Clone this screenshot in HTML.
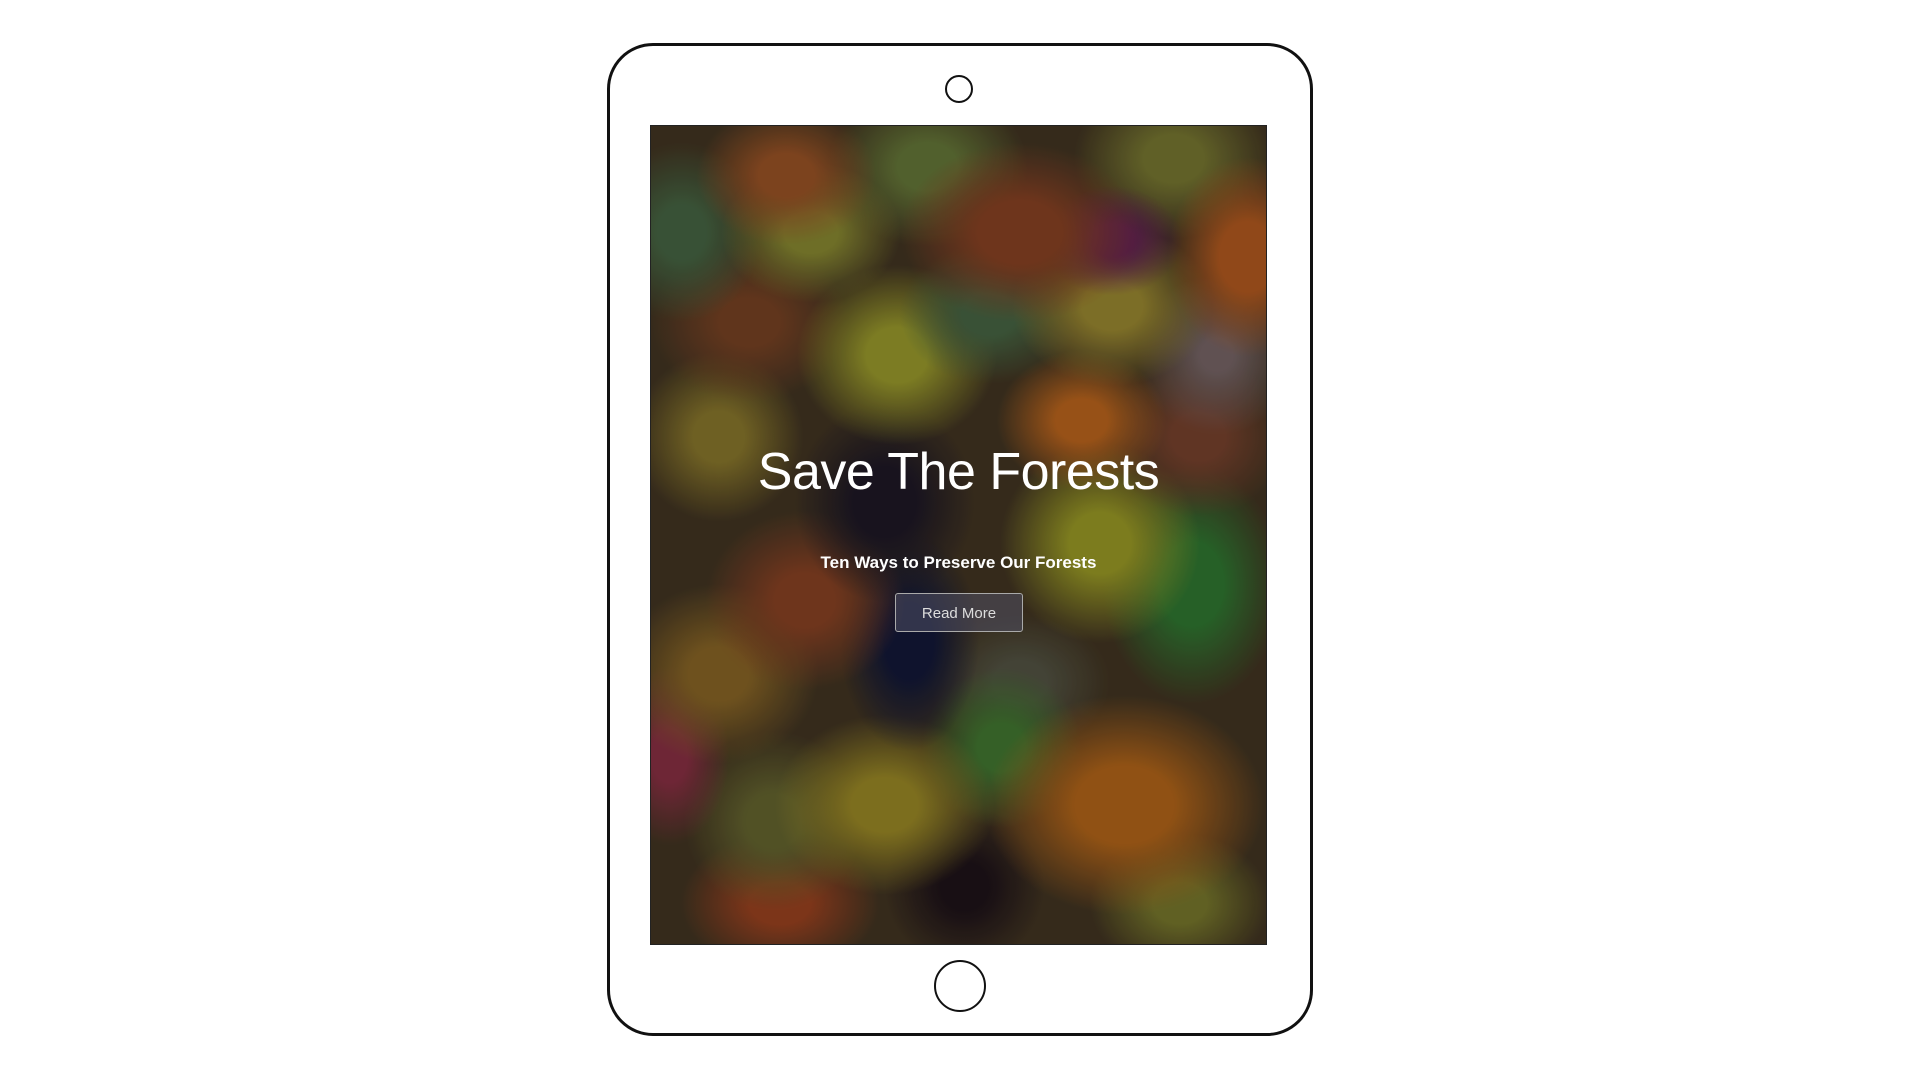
<!DOCTYPE html>
<html><head><meta charset="utf-8"><style>
html,body{margin:0;padding:0;background:#fff;width:1920px;height:1080px;overflow:hidden}
.tab{position:absolute;left:607px;top:43px;width:700px;height:987px;border:3.5px solid #111;border-radius:46px;box-sizing:content-box}
.cam{position:absolute;left:945px;top:75px;width:24px;height:24px;border:2px solid #111;border-radius:50%}
.home{position:absolute;left:934px;top:960px;width:48px;height:48px;border:2px solid #111;border-radius:50%}
.scr{position:absolute;left:650px;top:125px;width:617px;height:820px;border:1px solid #222;box-sizing:border-box;overflow:hidden;
background:
radial-gradient(ellipse 90px 70px at 22% 6%,#8a4a20 30%,transparent 100%),
radial-gradient(ellipse 90px 70px at 26% 13%,#7a7a2a 30%,transparent 100%),
radial-gradient(ellipse 80px 90px at 5% 13%,#3e5a3a 30%,transparent 100%),
radial-gradient(ellipse 120px 90px at 60% 13%,#7a3a1e 35%,transparent 100%),
radial-gradient(ellipse 70px 55px at 75% 14%,#5a1e4a 30%,transparent 100%),
radial-gradient(ellipse 80px 100px at 97% 16%,#a0501a 35%,transparent 100%),
radial-gradient(ellipse 100px 80px at 45% 5%,#5a6a30 30%,transparent 100%),
radial-gradient(ellipse 100px 80px at 85% 4%,#6a6a2a 30%,transparent 100%),
radial-gradient(ellipse 100px 80px at 75% 22%,#8a7a2a 30%,transparent 100%),
radial-gradient(ellipse 90px 70px at 55% 23%,#3f5a3a 30%,transparent 100%),
radial-gradient(ellipse 100px 90px at 40% 28%,#8a8a25 30%,transparent 100%),
radial-gradient(ellipse 100px 80px at 16% 24%,#6a3a1e 30%,transparent 100%),
radial-gradient(ellipse 80px 80px at 92% 28%,#6a5a5a 20%,transparent 100%),
radial-gradient(ellipse 85px 70px at 70% 36%,#a85a18 30%,transparent 100%),
radial-gradient(ellipse 90px 80px at 89% 38%,#6a3a26 30%,transparent 100%),
radial-gradient(ellipse 85px 85px at 11% 38%,#7a6a25 30%,transparent 100%),
radial-gradient(ellipse 90px 100px at 38% 46%,#1a1520 35%,transparent 100%),
radial-gradient(ellipse 100px 100px at 73% 51%,#8a8a20 30%,transparent 100%),
radial-gradient(ellipse 90px 120px at 88% 56%,#2a6a2a 35%,transparent 100%),
radial-gradient(ellipse 100px 90px at 25% 58%,#7a3a1e 30%,transparent 100%),
radial-gradient(ellipse 70px 110px at 42% 63%,#101530 35%,transparent 100%),
radial-gradient(ellipse 100px 90px at 11% 67%,#7a5a20 30%,transparent 100%),
radial-gradient(ellipse 60px 90px at 3% 77%,#7a2a3a 30%,transparent 100%),
radial-gradient(ellipse 140px 110px at 77% 83%,#a05a15 35%,transparent 100%),
radial-gradient(ellipse 110px 90px at 38% 83%,#8a7a20 30%,transparent 100%),
radial-gradient(ellipse 80px 80px at 57% 76%,#3a6a2a 30%,transparent 100%),
radial-gradient(ellipse 90px 90px at 20% 85%,#5a5a28 30%,transparent 100%),
radial-gradient(ellipse 80px 80px at 51% 93%,#1a1015 30%,transparent 100%),
radial-gradient(ellipse 100px 70px at 21% 95%,#8a3a1a 30%,transparent 100%),
radial-gradient(ellipse 90px 70px at 86% 95%,#6a6a25 30%,transparent 100%),
radial-gradient(ellipse 90px 70px at 60% 68%,#4a4a3a 30%,transparent 100%),
#3a2e1c}
.scr:after{content:"";position:absolute;inset:0;background:rgba(10,10,20,0.10)}
.t{position:absolute;left:0;width:100%;text-align:center;color:#fff;font-family:"Liberation Sans",sans-serif;z-index:2}
.h{top:316px;font-size:52px;font-weight:300;letter-spacing:-0.5px}
.s{top:427px;font-size:17px;font-weight:bold}
.b{position:absolute;z-index:2;left:244px;top:467px;width:128px;height:39px;border:1px solid #aaa;border-radius:3px;background:rgba(80,80,100,0.55);color:#ddd;font:15px "Liberation Sans",sans-serif;line-height:39px;text-align:center;box-sizing:border-box}
</style></head><body>
<div class="tab"></div>
<div class="cam"></div>
<div class="scr">
<div class="t h">Save The Forests</div>
<div class="t s">Ten Ways to Preserve Our Forests</div>
<div class="b">Read More</div>
</div>
<div class="home"></div>
</body></html>
